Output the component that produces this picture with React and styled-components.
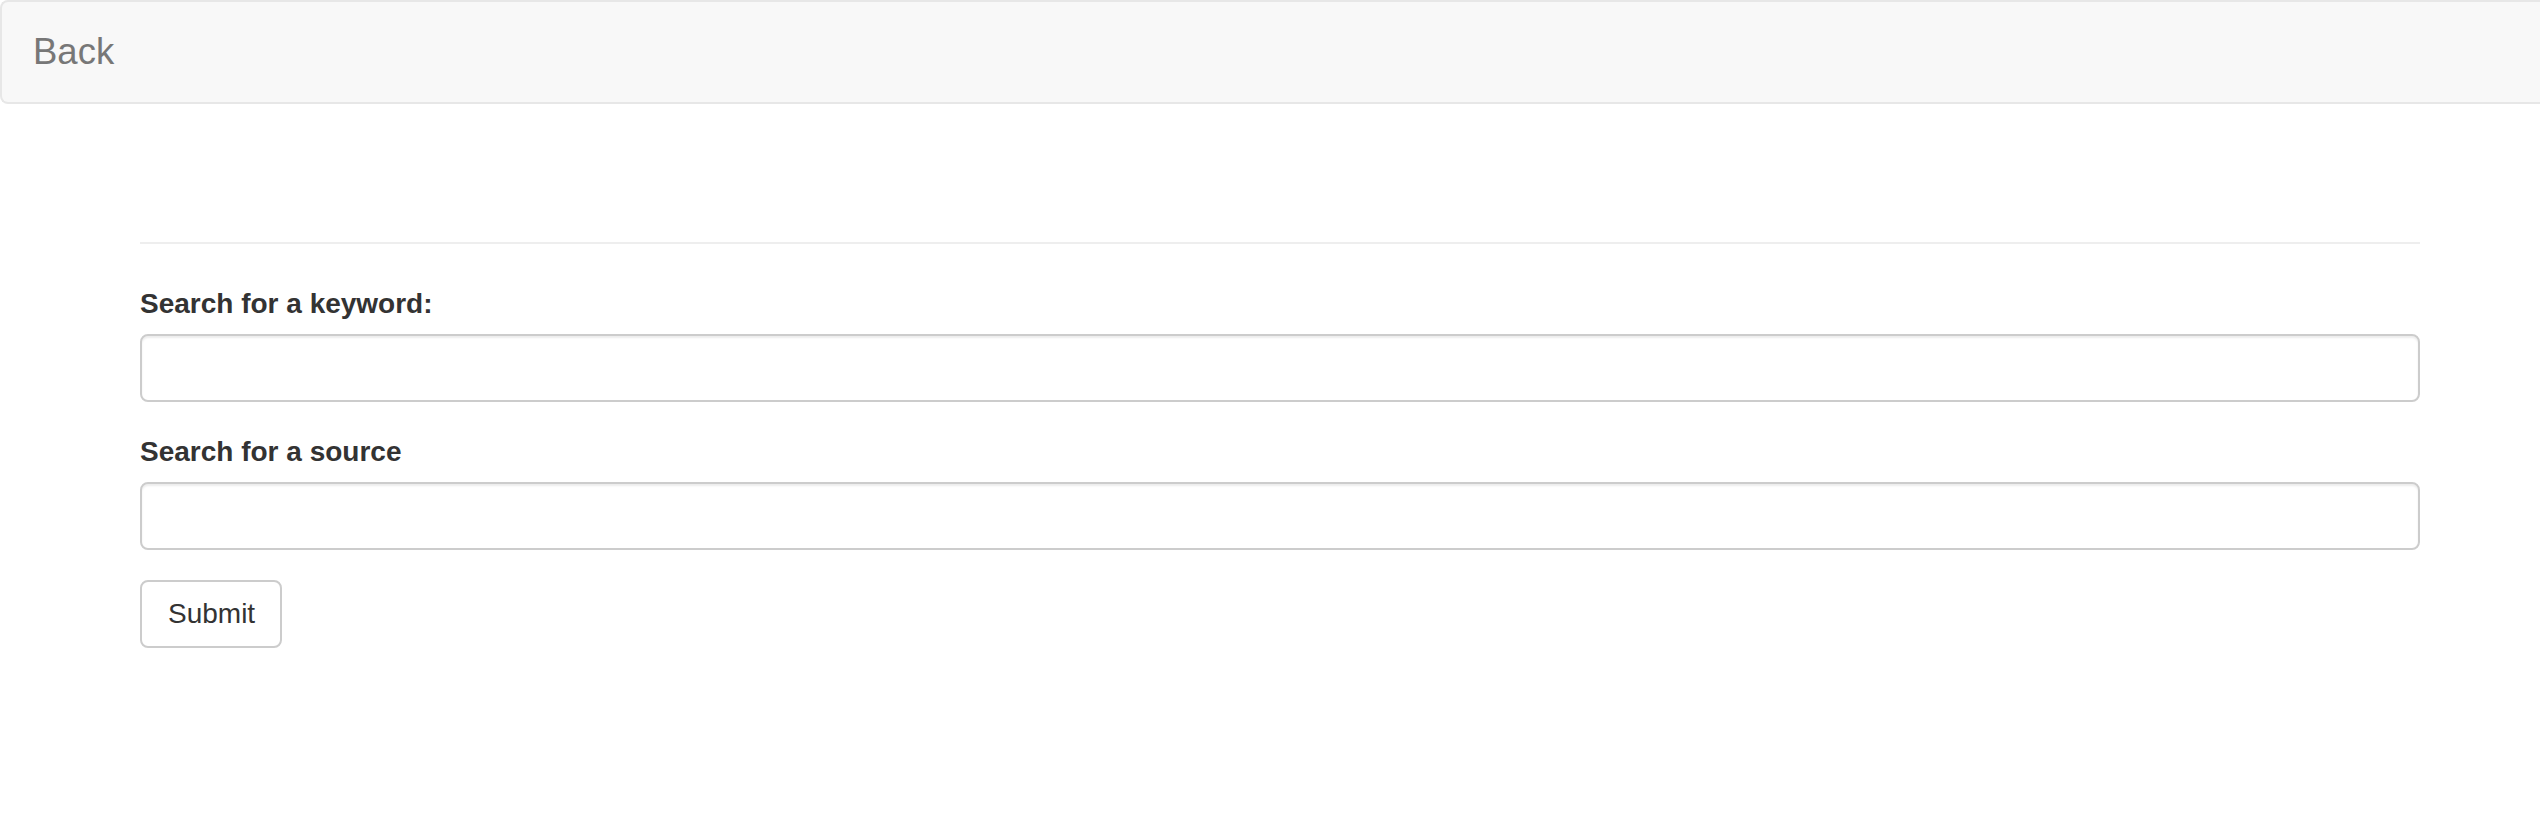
import React from "react";
import styled, { createGlobalStyle } from "styled-components";

const Global = createGlobalStyle`
  html, body { margin: 0; padding: 0; background: #fff; }
  body {
    font-family: "Liberation Sans", Arial, sans-serif;
    font-size: 28px;
    line-height: 1.428571;
    color: #333;
    overflow: hidden;
  }
  * { box-sizing: border-box; }
`;

const Navbar = styled.nav`
  display: flex;
  align-items: center;
  min-height: 104px;
  background: #f8f8f8;
  border: 2px solid #e7e7e7;
  border-right: none;
  border-radius: 8px 0 0 8px;
  margin-bottom: 40px;
`;

const Brand = styled.a`
  display: block;
  padding: 30px 30px 30px 31px;
  font-size: 36.5px;
  line-height: 40px;
  height: 100px;
  color: #777;
  text-decoration: none;
  cursor: pointer;
`;

const Main = styled.main`
  margin: 0 120px 0 140px;
  padding-top: 58px;
`;

const Rule = styled.hr`
  margin: 40px 0;
  border: 0;
  border-top: 2px solid #eee;
`;

const Form = styled.form`
  display: flex;
  flex-direction: column;
  align-items: flex-start;
`;

const Group = styled.div`
  width: 100%;
  margin-bottom: 30px;
`;

const Label = styled.label`
  display: block;
  margin-bottom: 10px;
  font-weight: 700;
  font-size: 28px;
  line-height: 40px;
  color: #333;
`;

const Input = styled.input`
  display: block;
  width: 100%;
  height: 68px;
  padding: 12px 24px;
  font-family: inherit;
  font-size: 28px;
  color: #555;
  background: #fff;
  border: 2px solid #ccc;
  border-radius: 8px;
  box-shadow: inset 0 2px 2px rgba(0, 0, 0, 0.075);
  outline: none;
`;

const Button = styled.button`
  height: 68px;
  padding: 12px 25px 12px 26px;
  font-family: inherit;
  font-size: 28px;
  line-height: 40px;
  color: #333;
  background: #fff;
  border: 2px solid #ccc;
  border-radius: 8px;
  cursor: pointer;
`;

export default function App() {
  return (
    <>
      <Global />
      <Navbar>
        <Brand>Back</Brand>
      </Navbar>
      <Main>
        <Rule />
        <Form onSubmit={(e) => e.preventDefault()}>
          <Group>
            <Label htmlFor="kw">Search for a keyword:</Label>
            <Input id="kw" type="text" />
          </Group>
          <Group>
            <Label htmlFor="src">Search for a source</Label>
            <Input id="src" type="text" />
          </Group>
          <Button type="submit">Submit</Button>
        </Form>
      </Main>
    </>
  );
}
